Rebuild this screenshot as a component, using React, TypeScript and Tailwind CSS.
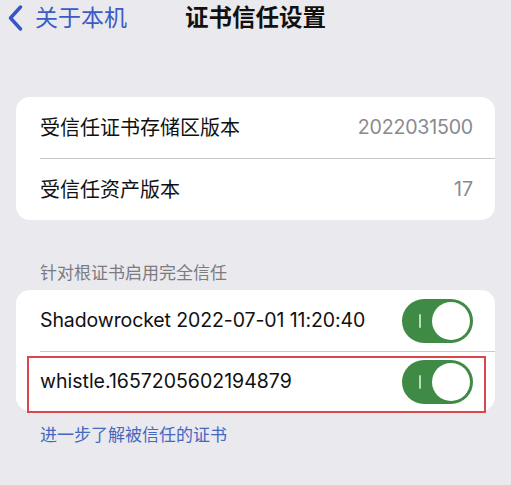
import React from 'react';

const FONT = { fontFamily: 'Inter, "Noto Sans CJK SC", sans-serif' };

const Toggle: React.FC = () => (
  <div className="relative w-[71px] h-[44px] rounded-full bg-[#3f8a45] flex-shrink-0">
    <span className="absolute left-[17px] top-[15px] w-[2px] h-[14px] bg-[#b9dcbb] rounded" />
    <span className="absolute right-[3px] top-[3px] w-[38px] h-[38px] rounded-full bg-white" />
  </div>
);

const App: React.FC = () => {
  return (
    <div className="w-[511px] h-[485px] bg-[#e9e9ee] overflow-hidden" style={FONT}>
      {/* Nav bar */}
      <div className="relative h-[36px] flex items-center">
        <div className="flex items-center pl-[8px] gap-[12px] text-[#3b5bc5]">
          <svg width="15" height="26" viewBox="0 0 15 26" fill="none">
            <path d="M12.5 2 L2.5 13 L12.5 24" stroke="#3556c4" strokeWidth="3.4" strokeLinecap="round" strokeLinejoin="round" />
          </svg>
          <span className="text-[23px] leading-none">关于本机</span>
        </div>
        <span className="absolute left-[185px] top-[6px] text-[23.5px] font-bold leading-none text-[#111]">证书信任设置</span>
      </div>

      {/* Version card */}
      <div className="mt-[61px] mx-[16px] bg-white rounded-[14px] overflow-hidden">
        <div className="h-[61px] pl-[24px] pr-[22px] flex items-center justify-between">
          <span className="text-[20px] text-[#111]">受信任证书存储区版本</span>
          <span className="text-[19.6px] tracking-[-0.2px] text-[#8a8a8e]">2022031500</span>
        </div>
        <div className="ml-[24px] h-px bg-[#c8c8cc]" />
        <div className="h-[61px] pl-[24px] pr-[22px] flex items-center justify-between">
          <span className="text-[20px] text-[#111]">受信任资产版本</span>
          <span className="text-[19.6px] text-[#8a8a8e]">17</span>
        </div>
      </div>

      {/* Section header */}
      <div className="mt-[41px] pl-[40px] text-[17px] leading-[24px] text-[#7b7b80]">针对根证书启用完全信任</div>

      {/* Trust card */}
      <div className="mt-[5px] mx-[16px] bg-white rounded-[14px] relative">
        <div className="h-[61px] pl-[24px] pr-[22px] flex items-center justify-between">
          <span className="text-[19.5px] tracking-[-0.1px] text-[#111]">Shadowrocket 2022-07-01 11:20:40</span>
          <Toggle />
        </div>
        <div className="ml-[24px] h-px bg-[#c8c8cc]" />
        <div className="h-[59px] pl-[24px] pr-[22px] flex items-center justify-between">
          <span className="text-[19.5px] tracking-[0px] text-[#111]">whistle.1657205602194879</span>
          <Toggle />
        </div>
        <div className="absolute left-[11px] right-[9px] top-[66px] bottom-[-2px] border-2 border-[#d9474c]" />
      </div>

      {/* Link */}
      <div className="mt-[12px] pl-[40px] text-[17px] leading-[24px] text-[#4468c0]">进一步了解被信任的证书</div>
    </div>
  );
};

export default App;
